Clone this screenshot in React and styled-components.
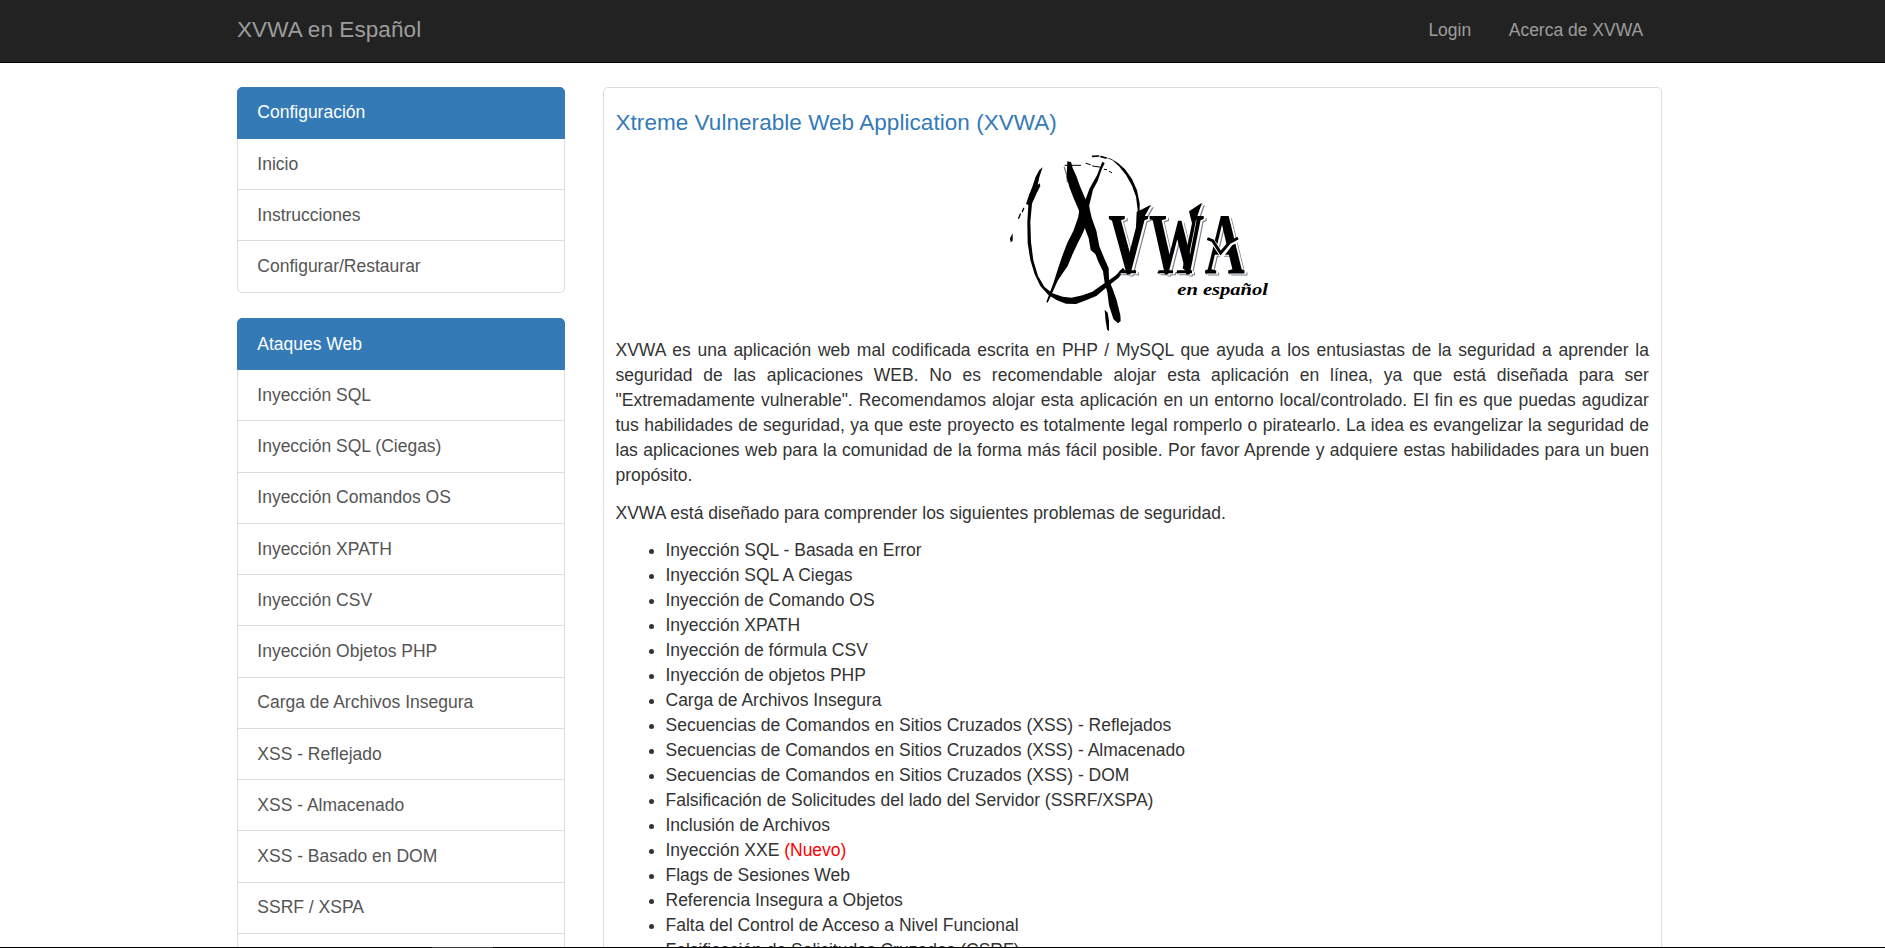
import React from 'react';
import styled, { createGlobalStyle } from 'styled-components';

const GlobalStyle = createGlobalStyle`
  * { box-sizing: border-box; }
  body {
    margin: 0;
    overflow: hidden;
    background: #fff;
    color: #333;
    font: 17.5px/25px "Liberation Sans", Arial, sans-serif;
  }
`;

const Page = styled.div`
  height: 948px;
  display: flex;
  flex-direction: column;
  overflow: hidden;
`;

const Navbar = styled.nav`
  flex: none;
  height: 63px;
  padding: 0 223px 1.5px 237px;
  background: #222;
  border-bottom: 1px solid #000;
  display: flex;
  align-items: center;
  justify-content: space-between;
`;

const Brand = styled.a`
  padding-bottom: 1.5px;
  color: #9d9d9d;
  font-size: 22.5px;
  letter-spacing: 0.08px;
`;

const NavLinks = styled.div`
  display: flex;
`;

const NavLink = styled.a`
  padding: 0 18.75px;
  color: #9d9d9d;
`;

const Content = styled.div`
  flex: 1;
  min-height: 0;
  overflow: hidden;
  display: flex;
  align-items: flex-start;
  gap: 37.5px;
  padding: 23.7px 0 0 237px;
`;

const Sidebar = styled.aside`
  flex: none;
  width: 328px;
  display: flex;
  flex-direction: column;
  gap: 25.1px;
`;

const ListGroup = styled.div`
  display: flex;
  flex-direction: column;
`;

const ListItem = styled.a`
  height: 52.25px;
  padding: 12.8px 19.3px 0;
  border: 1px solid ${(p) => (p.$active ? '#337ab7' : '#ddd')};
  background: ${(p) => (p.$active ? '#337ab7' : '#fff')};
  color: ${(p) => (p.$active ? '#fff' : '#555')};
  position: relative;
  z-index: ${(p) => (p.$active ? 1 : 0)};

  & + & { margin-top: -1px; }
  &:first-child { border-radius: 5px 5px 0 0; }
  &:last-child { border-radius: 0 0 5px 5px; }
`;

const Panel = styled.main`
  flex: none;
  width: 1059.4px;
  padding: 22.5px 12px 12px;
  border: 1px solid #ddd;
  border-radius: 5px;
`;

const Title = styled.h4`
  margin: 0;
  height: 29.8px;
  color: #337ab7;
  font-size: 22.5px;
  font-weight: 400;
  line-height: 25px;
  letter-spacing: 0.05px;
`;

const LogoImage = styled.svg`
  display: block;
  width: 284px;
  height: 200px;
  margin: 0 auto -2px;
`;

const Lettering = styled.g`
  filter: drop-shadow(6px 3px 0 #fff) drop-shadow(3px 3px 0 #77818e);
`;

const Initials = styled.text`
  font: 700 258px "Liberation Serif", serif;
  font-kerning: none;
`;

const Tagline = styled.text`
  font: italic 700 50px "Liberation Serif", serif;
`;

const Paragraph = styled.p`
  margin: 0 0 12.8px;
  text-align: justify;
`;

const IssueList = styled.ul`
  margin: -0.8px 0 0;
  padding-left: 50px;
`;

const NewTag = styled.span`
  color: #f00;
`;

const BottomEdge = styled.div`
  flex: none;
  height: 1px;
  background: #000;
  padding-left: 432px;
`;

const EdgeMark = styled.div`
  width: 61px;
  height: 1px;
  background: #3a3a3a;
`;

const config = ['Inicio', 'Instrucciones', 'Configurar/Restaurar'];

const attacks = [
  'Inyección SQL',
  'Inyección SQL (Ciegas)',
  'Inyección Comandos OS',
  'Inyección XPATH',
  'Inyección CSV',
  'Inyección Objetos PHP',
  'Carga de Archivos Insegura',
  'XSS - Reflejado',
  'XSS - Almacenado',
  'XSS - Basado en DOM',
  'SSRF / XSPA',
  '',
];

const issues = [
  'Inyección SQL - Basada en Error',
  'Inyección SQL A Ciegas',
  'Inyección de Comando OS',
  'Inyección XPATH',
  'Inyección de fórmula CSV',
  'Inyección de objetos PHP',
  'Carga de Archivos Insegura',
  'Secuencias de Comandos en Sitios Cruzados (XSS) - Reflejados',
  'Secuencias de Comandos en Sitios Cruzados (XSS) - Almacenado',
  'Secuencias de Comandos en Sitios Cruzados (XSS) - DOM',
  'Falsificación de Solicitudes del lado del Servidor (SSRF/XSPA)',
  'Inclusión de Archivos',
  <>Inyección XXE <NewTag>(Nuevo)</NewTag></>,
  'Flags de Sesiones Web',
  'Referencia Insegura a Objetos',
  'Falta del Control de Acceso a Nivel Funcional',
  'Falsificación de Solicitudes Cruzadas (CSRF)',
];

function Menu({ title, items }) {
  return (
    <ListGroup>
      <ListItem $active>{title}</ListItem>
      {items.map((item) => (
        <ListItem key={item}>{item}</ListItem>
      ))}
    </ListGroup>
  );
}

function Logo() {
  return (
    <LogoImage viewBox="0 0 852 600" role="img" aria-label="XVWA">
      {/* brushed ring */}
      <path d="M158 82 L148 90 L137 110 L127 140 L117 165 L108 192 L115 195 L112 245 L113 310 L121 360 L134 403 L151 438 L175 465 L201 481 L228 491 L258 492 L288 481 L319 468 L350 442 L385 414 L405 391 L399 383 L376 407 L341 431 L307 455 L278 466 L244 473 L218 470 L187 460 L163 440 L144 408 L130 361 L123 306 L121 245 L126 191 L140 160 L151 138 L149 130 L143 134 L149 108 Z" />
      <path d="M344 51 L367 61 L387 79 L408 105 L426 137 L438 170 L443 210 L441 242 L438 273 L446 273 L449 236 L449 190 L441 151 L426 117 L405 88 L384 69 L363 56 Z" />
      <g fill="none" stroke="#000" strokeLinecap="round">
        <path d="M308 49 L326 48 M333 50 L348 54" strokeWidth="5" />
        <path d="M225 76 L272 76 M288 70 L301 74 M308 78 L335 82 M343 88 L350 89 M358 94 L365 98" strokeWidth="3" />
        <path d="M101 205 L97 215 M91 222 L86 235" strokeWidth="4" />
        <path d="M223 82 L231 107 L232 125" stroke="#777" strokeWidth="4" />
      </g>
      <path d="M68 280 L60 295 L62 307 L68 302 Z" />
      {/* crossing strokes */}
      <path d="M232 64 L243 66 L248 84 L259 108 L270 139 L284 172 L297 197 L305 233 L319 272 L328 319 L344 358 L356 385 L357 420 L368 447 L380 481 L391 525 L392 543 L384 550 L370 537 L357 496 L352 457 L344 429 L339 394 L325 365 L316 342 L302 330 L296 295 L284 263 L265 207 L251 175 L238 141 L230 112 Z" />
      <path d="M337 65 L344 70 L335 88 L323 123 L309 149 L298 195 L294 240 L279 278 L265 306 L248 342 L233 378 L214 406 L203 422 L183 467 L173 488 L169 486 L190 430 L203 389 L216 350 L232 308 L250 273 L265 230 L269 199 L286 180 L299 145 L321 106 Z" />
      <path d="M344 509 L353 518 L357 542 L357 574 L351 568 L347 544 Z" />

      <Lettering>
        <Initials transform="translate(355 398) scale(.65 1)">VWA</Initials>
        {/* raised arms and feet */}
        <path d="M440 216 L483 194 L458 240 L416 393 L406 385 L438 262 Z" />
        <path d="M597 214 L636 188 L618 240 L588 392 L578 385 L606 250 Z" />
        <path d="M390 391 H438 V400 H386 Z M506 391 H549 V400 H502 Z M562 391 H606 V400 H558 Z" />
      </Lettering>
      <path d="M656 298 L668 304 L696 345 L722 310 L746 298" fill="none" stroke="#fff" strokeWidth="14" />
      <path d="M652 296 L668 302 L692 339 L718 308 L744 294" fill="none" stroke="#000" strokeWidth="9" />
      <Tagline x="562" y="465" textLength="272" lengthAdjust="spacingAndGlyphs">en español</Tagline>
    </LogoImage>
  );
}

export default function App() {
  return (
    <Page>
      <GlobalStyle />
      <Navbar>
        <Brand>XVWA en Español</Brand>
        <NavLinks>
          <NavLink>Login</NavLink>
          <NavLink>Acerca de XVWA</NavLink>
        </NavLinks>
      </Navbar>
      <Content>
        <Sidebar>
          <Menu title="Configuración" items={config} />
          <Menu title="Ataques Web" items={attacks} />
        </Sidebar>
        <Panel>
          <Title>Xtreme Vulnerable Web Application (XVWA)</Title>
          <Logo />
          <Paragraph>
            XVWA es una aplicación web mal codificada escrita en PHP / MySQL que ayuda a los entusiastas de la
            seguridad a aprender la seguridad de las aplicaciones WEB. No es recomendable alojar esta aplicación en
            línea, ya que está diseñada para ser "Extremadamente vulnerable". Recomendamos alojar esta aplicación en
            un entorno local/controlado. El fin es que puedas agudizar tus habilidades de seguridad, ya que este
            proyecto es totalmente legal romperlo o piratearlo. La idea es evangelizar la seguridad de las
            aplicaciones web para la comunidad de la forma más fácil posible. Por favor Aprende y adquiere estas
            habilidades para un buen propósito.
          </Paragraph>
          <Paragraph>XVWA está diseñado para comprender los siguientes problemas de seguridad.</Paragraph>
          <IssueList>
            {issues.map((issue, i) => (
              <li key={i}>{issue}</li>
            ))}
          </IssueList>
        </Panel>
      </Content>
      <BottomEdge>
        <EdgeMark />
      </BottomEdge>
    </Page>
  );
}
